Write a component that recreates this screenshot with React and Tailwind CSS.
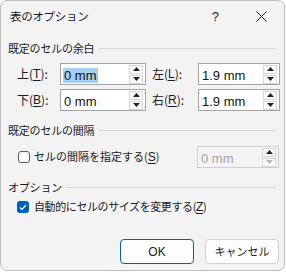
import React from 'react';

const jp = { fontFamily: '"Noto Sans CJK JP", "Liberation Sans", sans-serif' };
const lat = { fontFamily: '"Liberation Sans", "Noto Sans CJK JP", sans-serif' };

// スピンボタン
const Spinner = ({ disabled }) => (
  <div className="flex flex-col w-[14px] h-[19px] gap-[1px] mr-[2px]">
    <div className="flex-1 flex items-center justify-center border border-[#d6d6d6] bg-[#fafafa]">
      <svg width="7" height="4" viewBox="0 0 7 4"><path d="M0 4 L3.5 0 L7 4 Z" fill="#222" /></svg>
    </div>
    <div className="flex-1 flex items-center justify-center border border-[#d6d6d6] bg-[#fafafa]">
      <svg width="7" height="4" viewBox="0 0 7 4"><path d="M0 0 L3.5 4 L7 0 Z" fill={disabled ? '#b5b5b5' : '#222'} /></svg>
    </div>
  </div>
);

const NumInput = ({ value, width, selected, disabled }) => (
  <div
    className={`flex items-center h-[22px] border ${disabled ? 'border-[#cfcfcf] bg-[#f3f3f3]' : 'border-[#a3a3a3] bg-white'}`}
    style={{ width }}
  >
    <div className="flex-1 pl-[2px]">
      <span
        className={`text-[13px] leading-[17px] px-[1px] ${selected ? 'bg-[#a6cdf2]' : ''} ${disabled ? 'text-[#a5a5a5]' : 'text-[#111]'}`}
        style={lat}
      >
        {value}
      </span>
    </div>
    <Spinner disabled={disabled} />
  </div>
);

const Label = ({ pre, key2, width }) => (
  <div className="text-[12px] text-[#1a1a1a] flex items-center" style={{ width, ...jp }}>
    {pre}(<span className="underline underline-offset-2" style={lat}>{key2}</span>):
  </div>
);

const Section = ({ title }) => (
  <div className="flex items-center h-[14px] pl-[7px] pr-[8px]">
    <span className="text-[11px] tracking-[-0.2px] text-[#1a1a1a] leading-[14px]" style={jp}>{title}</span>
    <div className="flex-1 h-px bg-[#dadada] ml-[5px]" />
  </div>
);

export default function App() {
  return (
    <div className="w-[286px] h-[274px] bg-white">
      <div className="w-[285px] h-[271px] rounded-[7px] border border-[#bdbdbd] bg-[#f3f3f3] flex flex-col overflow-hidden">
        {/* タイトルバー */}
        <div className="flex items-center h-[31px] pl-[9px]">
          <span className="text-[11.5px] tracking-[-0.3px] text-[#1a1a1a]" style={jp}>表のオプション</span>
          <span className="ml-auto text-[13px] text-[#222] mr-[37px]" style={lat}>?</span>
          <svg width="11" height="11" viewBox="0 0 11 11" className="mr-[17px]">
            <path d="M0.5 0.5 L10.5 10.5 M10.5 0.5 L0.5 10.5" stroke="#222" strokeWidth="1" />
          </svg>
        </div>

        <div className="mt-[9px]"><Section title="既定のセルの余白" /></div>

        <div className="flex items-center mt-[8px] pl-[16px]">
          <Label pre="上" key2="T" width="43px" />
          <NumInput value="0 mm" width="86px" selected />
          <div className="ml-[6px]"><Label pre="左" key2="L" width="46px" /></div>
          <NumInput value="1.9 mm" width="82px" />
        </div>
        <div className="flex items-center mt-[4px] pl-[16px]">
          <Label pre="下" key2="B" width="43px" />
          <NumInput value="0 mm" width="86px" />
          <div className="ml-[6px]"><Label pre="右" key2="R" width="46px" /></div>
          <NumInput value="1.9 mm" width="82px" />
        </div>

        <div className="mt-[12px]"><Section title="既定のセルの間隔" /></div>

        <div className="flex items-center mt-[9px] pl-[17px]">
          <div className="w-[12px] h-[12px] rounded-[3px] border border-[#5f5f5f] bg-[#fbfbfb]" />
          <span className="ml-[4px] text-[11px] text-[#1a1a1a]" style={jp}>
            セルの間隔を指定する(<span className="underline underline-offset-2 text-[12px]" style={lat}>S</span>)
          </span>
          <div className="ml-auto mr-[5px]"><NumInput value="0 mm" width="82px" disabled /></div>
        </div>

        <div className="mt-[12px]"><Section title="オプション" /></div>

        <div className="flex items-center h-[16px] mt-[5px] pl-[16px]">
          <div className="w-[12px] h-[12px] rounded-[3px] bg-[#005fb8] flex items-center justify-center">
            <svg width="8" height="7" viewBox="0 0 8 7"><path d="M1 3.5 L3 5.5 L7 1" stroke="white" strokeWidth="1.2" fill="none" /></svg>
          </div>
          <span className="ml-[5px] text-[11px] tracking-[-0.4px] text-[#1a1a1a]" style={jp}>
            自動的にセルのサイズを変更する(<span className="underline underline-offset-2 text-[12px]" style={lat}>Z</span>)
          </span>
        </div>

        <div className="flex mt-[24px] pl-[119px] gap-[11px]">
          <button className="w-[74px] h-[25px] rounded-[4px] border border-[#005fb8] bg-[#fdfdfd] text-[12px] text-[#1a1a1a]" style={lat}>OK</button>
          <button className="w-[74px] h-[25px] rounded-[4px] border border-[#d2d2d2] bg-[#fdfdfd] text-[11px] text-[#1a1a1a]" style={jp}>キャンセル</button>
        </div>
      </div>
    </div>
  );
}
